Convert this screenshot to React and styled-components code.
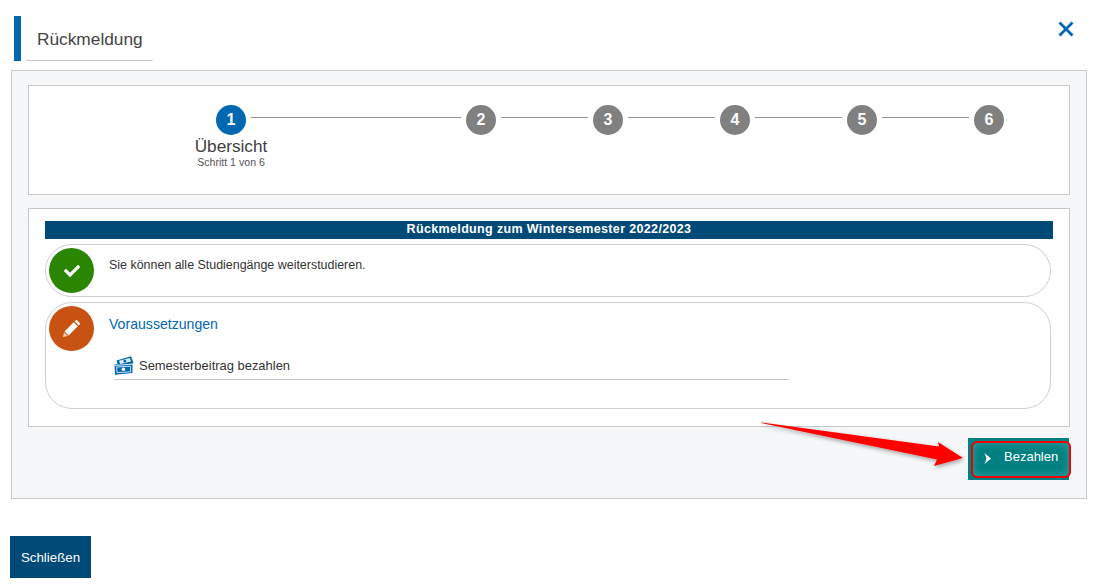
import React from 'react'
import styled, { createGlobalStyle } from 'styled-components'
import { FaCheck } from 'react-icons/fa'

const GlobalStyle = createGlobalStyle`
  html, body {
    margin: 0;
    padding: 0;
    background: #fff;
    font-family: "Liberation Sans", Arial, sans-serif;
    color: #333;
  }
`

const STEPS = [
  { n: 1, gap: 210, active: true, title: 'Übersicht', sub: 'Schritt 1 von 6' },
  { n: 2, gap: 87 },
  { n: 3, gap: 87 },
  { n: 4, gap: 87 },
  { n: 5, gap: 87 },
  { n: 6 },
]

export default function App() {
  return (
    <Page>
      <GlobalStyle />
      <Header>
        <Accent />
        <Title>Rückmeldung</Title>
        <CloseButton aria-label="Schließen">
          <svg width="16" height="16" viewBox="0 0 16 16">
            <path d="M1.5 1.5 L14.5 14.5 M14.5 1.5 L1.5 14.5" stroke="#0067b1" strokeWidth="2.8" fill="none" />
          </svg>
        </CloseButton>
      </Header>

      <Panel>
        <StepBox>
          {STEPS.map((s) => (
            <React.Fragment key={s.n}>
              <Step>
                <StepCircle $active={s.active}>{s.n}</StepCircle>
                {s.title && <StepTitle>{s.title}</StepTitle>}
                {s.sub && <StepSub>{s.sub}</StepSub>}
              </Step>
              {s.gap && <Connector $width={s.gap} />}
            </React.Fragment>
          ))}
        </StepBox>

        <ContentBox>
          <SemesterBar>Rückmeldung zum Wintersemester 2022/2023</SemesterBar>
          <InfoRow>
            <RoundIcon $color="#2a8500"><FaCheck size={16} /></RoundIcon>
            <InfoText>Sie können alle Studiengänge weiterstudieren.</InfoText>
          </InfoRow>
          <RequirementsRow>
            <RoundIcon $color="#c85212">
              <svg width="17" height="17" viewBox="0 0 17 17" fill="#fff">
                <path d="M11.6 1.3 L12.8 0.3 Q13.6 -0.2 14.3 0.4 L16.6 2.7 Q17.2 3.4 16.7 4.2 L15.7 5.4 Z" />
                <path d="M10.7 2.2 L14.8 6.3 L5.6 15.5 L1.5 11.4 Z" />
                <path d="M1 12.4 L4.6 16 L0 17 Z" opacity="0.75" />
              </svg>
            </RoundIcon>
            <RequirementsBody>
              <RequirementsTitle>Voraussetzungen</RequirementsTitle>
              <Requirement>
                <svg width="20" height="19" viewBox="0 0 20 19">
                  <path d="M2.5 4.5 L17 0.3 L19.5 6.5 L18.5 7 L18.5 17 L1 18.7 L0.5 8.6 L3.5 8 Z" fill="#0067b1" />
                  <path d="M5 4.8 L15.8 2 L17 5.6 L6.2 8 Z" fill="#fff" opacity="0.9" />
                  <circle cx="10.8" cy="5" r="1.5" fill="#0067b1" />
                  <path d="M0.8 9.4 L18.4 8.2" stroke="#fff" strokeWidth="0.9" />
                  <path d="M2.6 11 L16.4 10.2 L16.7 15.8 L3 16.6 Z" fill="none" stroke="#fff" strokeWidth="0.8" />
                  <circle cx="9.4" cy="13.3" r="1.8" fill="#fff" />
                </svg>
                <span>Semesterbeitrag bezahlen</span>
              </Requirement>
            </RequirementsBody>
          </RequirementsRow>
        </ContentBox>

        <PayRow>
          <PayButton>
            <svg width="7" height="11" viewBox="0 0 7 11">
              <path d="M0.5 0 L7 5.5 L0.5 11 L2.5 5.5 Z" fill="#fff" />
            </svg>
            <span>Bezahlen</span>
          </PayButton>
        </PayRow>
      </Panel>

      <CloseFooterButton>Schließen</CloseFooterButton>

      <Annotation width="1094" height="588" viewBox="0 0 1094 588">
        <defs>
          <filter id="arrowShadow" x="-5%" y="-20%" width="110%" height="150%">
            <feDropShadow dx="1" dy="2" stdDeviation="2" floodColor="#000" floodOpacity="0.35" />
          </filter>
        </defs>
        <path d="M761 423 L762 422.5 L939 446.5 L938 442 L963 458 L934 466 L937 459.5 Z" fill="#fe0000" filter="url(#arrowShadow)" />
      </Annotation>
    </Page>
  )
}

const Page = styled.div`
  position: relative;
  width: 1094px;
  height: 588px;
  overflow: hidden;
  box-sizing: border-box;
  padding: 16px 7px 0 11px;
`

const Header = styled.header`
  display: flex;
  align-items: stretch;
  height: 45px;
  margin-left: 3px;
  margin-bottom: 9px;
`

const Accent = styled.div`
  width: 7px;
  background: #0067b1;
  margin-right: 5px;
`

const Title = styled.h1`
  width: 127px;
  margin: 0;
  padding: 11px 0 0 11px;
  box-sizing: border-box;
  font-size: 17.3px;
  font-weight: 400;
  line-height: 24px;
  color: #444;
  border-bottom: 1px solid #c8c8c8;
`

const CloseButton = styled.button`
  margin: 5px 13px 0 auto;
  padding: 0;
  width: 16px;
  height: 16px;
  border: 0;
  background: none;
  display: flex;
`

const Panel = styled.section`
  width: 1076px;
  height: 429px;
  box-sizing: border-box;
  padding: 14px 16px 0;
  background: #f6f7f9;
  border: 1px solid #cbcbcb;
`

const StepBox = styled.div`
  height: 110px;
  box-sizing: border-box;
  display: flex;
  align-items: flex-start;
  padding: 19px 0 0 187px;
  background: #fff;
  border: 1px solid #c8c8c8;
`

const Step = styled.div`
  width: 30px;
  display: flex;
  flex-direction: column;
  align-items: center;
  flex: none;
`

const StepCircle = styled.div`
  width: 30px;
  height: 30px;
  flex: none;
  border-radius: 50%;
  display: flex;
  align-items: center;
  justify-content: center;
  font-size: 16px;
  font-weight: 700;
  color: #fff;
  background: ${(p) => (p.$active ? '#0067b1' : '#808080')};
`

const StepTitle = styled.div`
  margin-top: 1px;
  font-size: 17.2px;
  line-height: 20px;
  white-space: nowrap;
  color: #404040;
`

const StepSub = styled.div`
  margin-top: 1px;
  font-size: 10.6px;
  line-height: 11px;
  white-space: nowrap;
  color: #555;
`

const Connector = styled.div`
  flex: none;
  width: ${(p) => p.$width}px;
  height: 1px;
  margin: 12px 5px 0;
  background: #949494;
`

const ContentBox = styled.div`
  height: 219px;
  box-sizing: border-box;
  margin-top: 13px;
  padding: 12px 16px 0;
  background: #fff;
  border: 1px solid #c8c8c8;
`

const SemesterBar = styled.div`
  height: 18px;
  background: #004a77;
  color: #fff;
  font-size: 12.5px;
  font-weight: 700;
  line-height: 17px;
  letter-spacing: 0.35px;
  text-align: center;
`

const InfoRow = styled.div`
  width: 1006px;
  height: 53px;
  box-sizing: border-box;
  display: flex;
  margin-top: 5px;
  padding: 3px;
  border: 1px solid #cfcfcf;
  border-radius: 27px;
`

const RequirementsRow = styled(InfoRow)`
  height: 107px;
`

const RoundIcon = styled.div`
  width: 45px;
  height: 45px;
  flex: none;
  border-radius: 50%;
  display: flex;
  align-items: center;
  justify-content: center;
  color: #fff;
  background: ${(p) => p.$color};
`

const InfoText = styled.p`
  margin: 10px 0 0 15px;
  font-size: 12.45px;
  line-height: 15px;
  color: #333;
`

const RequirementsBody = styled.div`
  flex: 1;
  margin-left: 15px;
`

const RequirementsTitle = styled.h2`
  margin: 10px 0 0;
  font-size: 14.1px;
  font-weight: 400;
  line-height: 17px;
  color: #0067b1;
`

const Requirement = styled.div`
  width: 675px;
  height: 28px;
  box-sizing: border-box;
  display: flex;
  align-items: center;
  gap: 5px;
  margin: 19px 0 0 5px;
  font-size: 12.95px;
  color: #333;
  border-bottom: 1px solid #c8c8c8;
`

const PayRow = styled.div`
  display: flex;
  justify-content: flex-end;
  margin: 11px 1px 0 0;
`

const PayButton = styled.button`
  position: relative;
  width: 101px;
  height: 42px;
  display: flex;
  align-items: flex-start;
  gap: 13px;
  padding: 11px 0 0 16px;
  box-sizing: border-box;
  border: 0;
  color: #fff;
  font-family: inherit;
  font-size: 13px;
  line-height: 15px;
  background: #008080;

  svg {
    margin-top: 4px;
  }

  &::after {
    content: '';
    position: absolute;
    left: 3px;
    right: -2px;
    top: 3px;
    bottom: 2px;
    border: 2px solid #f00000;
    border-radius: 6px;
    box-shadow: inset 0 0 8px rgba(160, 230, 225, 0.35);
  }
`

const CloseFooterButton = styled.button`
  display: block;
  width: 81px;
  height: 42px;
  margin: 37px 0 0 -1px;
  border: 0;
  color: #fff;
  font-family: inherit;
  font-size: 13.3px;
  background: #004a77;
`

const Annotation = styled.svg`
  position: absolute;
  inset: 0;
  pointer-events: none;
`
